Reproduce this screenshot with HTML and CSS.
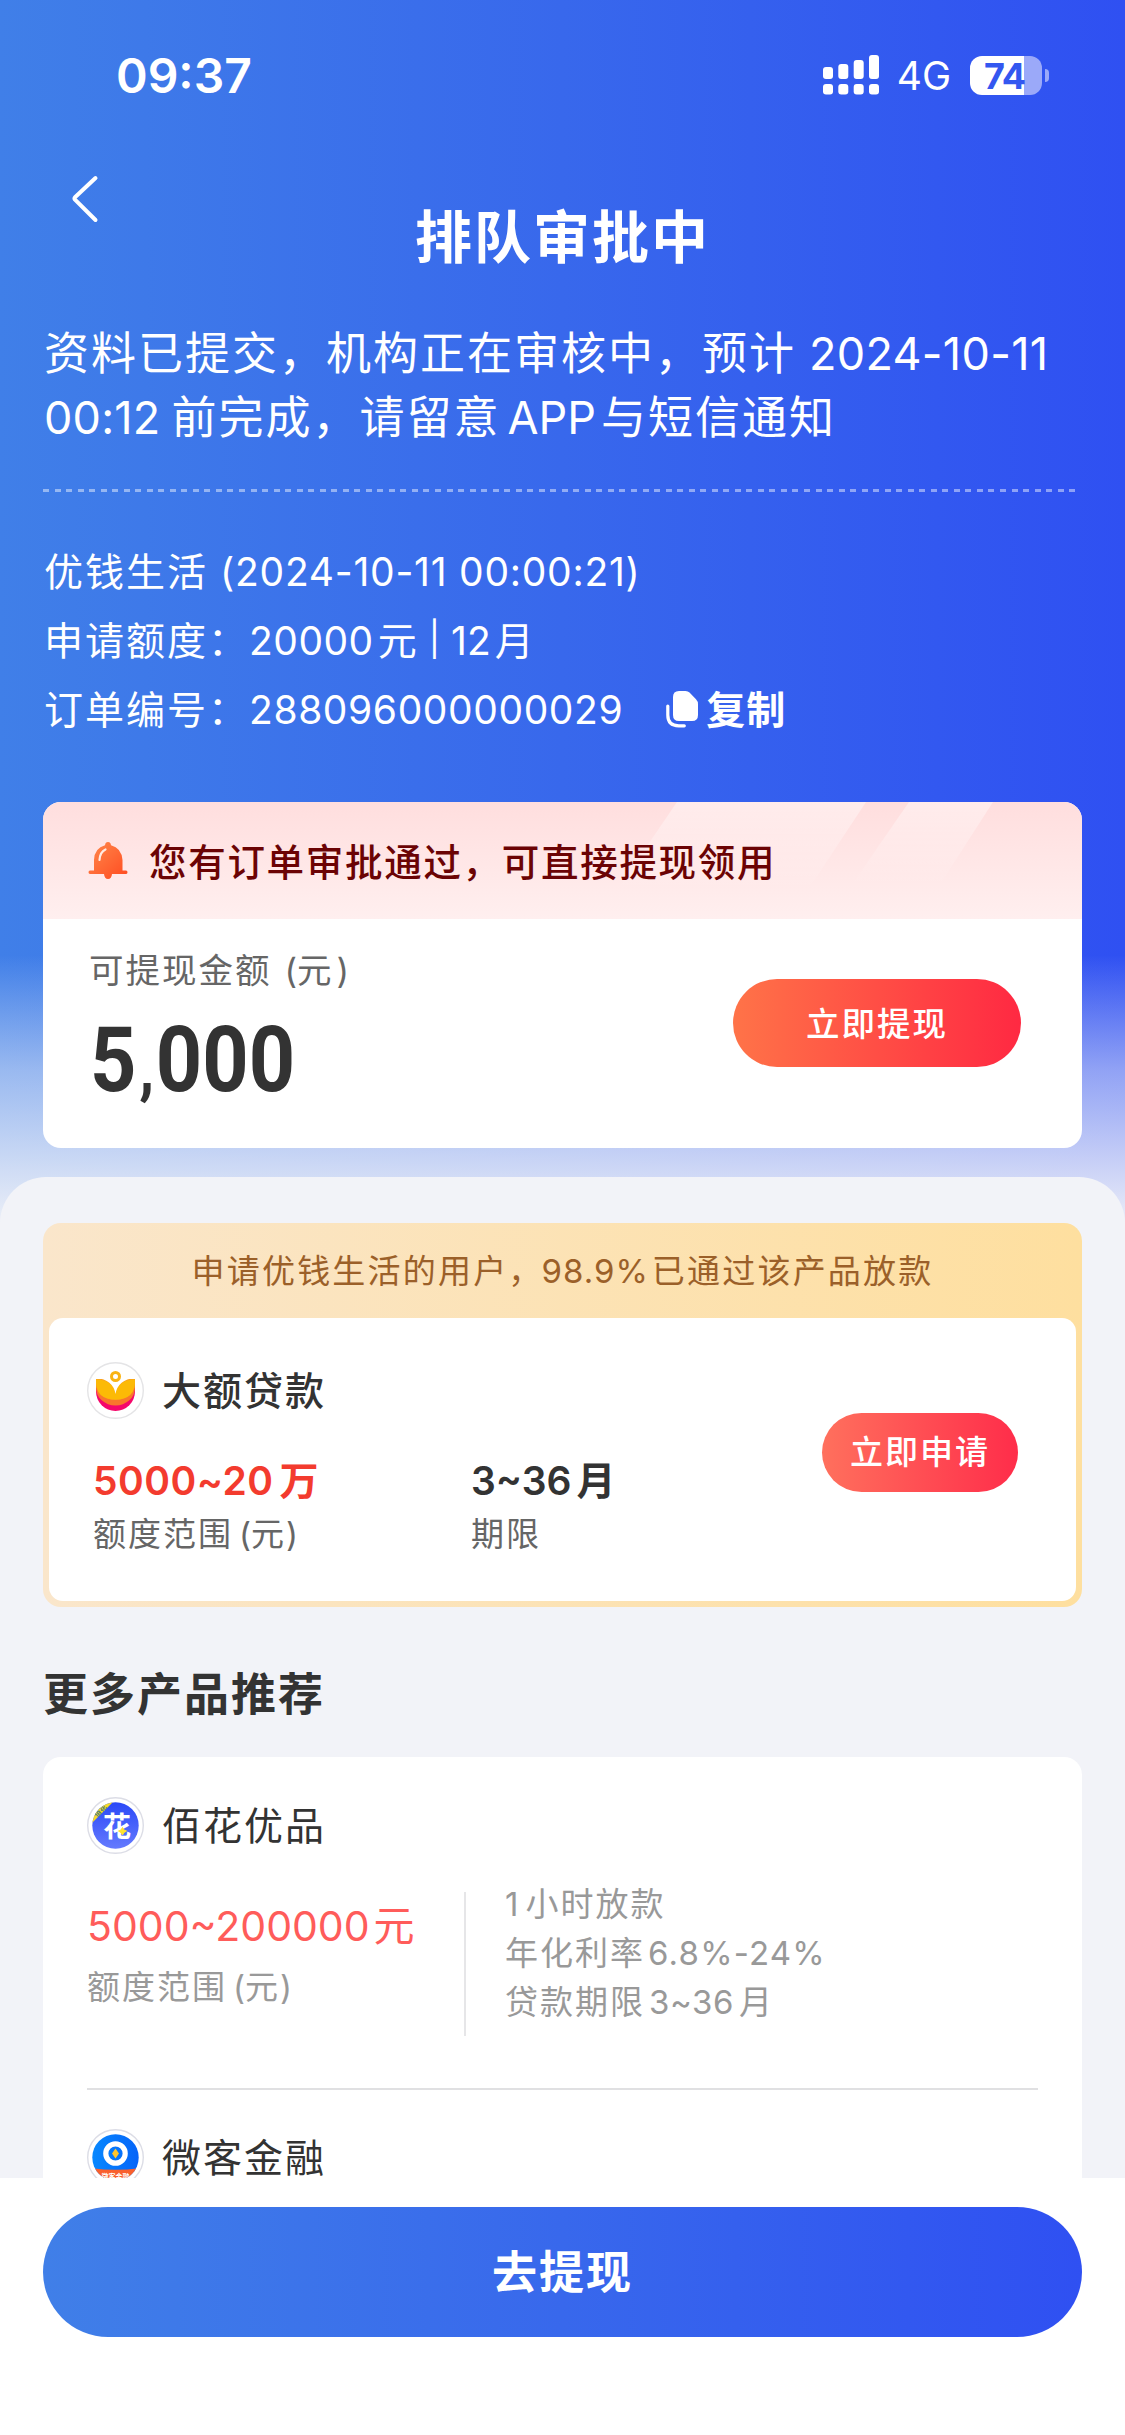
FILE: index.html
```html
<!DOCTYPE html>
<html lang="zh-CN">
<head>
<meta charset="utf-8">
<title>排队审批中</title>
<link rel="stylesheet" href="styles.css">
</head>
<body>
<div class="screen">
  <main class="content">
    <section class="hero">
      <div class="status-bar">
        <span class="time">09:37</span>
        <div class="status-icons">
          <svg class="signal" width="57" height="40" viewBox="0 0 57 40" fill="#fff">
            <rect x="0" y="12" width="10" height="12" rx="3"/><rect x="15.3" y="9" width="10" height="15" rx="3"/><rect x="30.7" y="5" width="10" height="19" rx="3"/><rect x="46" y="0" width="10" height="24" rx="3"/>
            <rect x="0" y="29" width="10" height="10.5" rx="3"/><rect x="15.3" y="29" width="10" height="10.5" rx="3"/><rect x="30.7" y="29" width="10" height="10.5" rx="3"/><rect x="46" y="29" width="10" height="10.5" rx="3"/>
          </svg>
          <span class="network">4G</span>
          <div class="battery"><span class="battery-level">74</span></div>
          <span class="battery-tip"></span>
        </div>
      </div>
      <header class="nav">
        <svg class="back" width="28" height="48" viewBox="0 0 28 48" fill="none" stroke="#fff" stroke-width="4" stroke-linecap="round" stroke-linejoin="round"><path d="M24.500 3 4 22.200q-1 1.200 0 2.400L24.500 45"/></svg>
        <h1>排队审批中</h1>
      </header>
      <div class="desc">
        <p>资料已提交，机构正在审核中，预计<span class="n d1">2024-10-11</span></p>
        <p><span class="n d2">00:12</span>前完成，请留意<span class="n d3">APP</span>与短信通知</p>
      </div>
      <div class="dashes"></div>
      <div class="info">
        <p>优钱生活<span class="n i1">(2024-10-11 00:00:21)</span></p>
        <p>申请额度：<span class="n i2">20000</span>元<span class="n i3">|</span><span class="n i4">12</span>月</p>
        <p>订单编号：<span class="n i5">288096000000029</span><span class="copy"><svg width="33" height="38" viewBox="0 0 33 38"><path d="M11 0h8.500q2.500 0 4 1.600l6.500 6.600q2 2 2 5V24q0 6-6 6H13q-6 0-6-6V6Q7 0 13 0z" fill="#fff"/><path d="M1.800 15v9q0 10.800 11 10.800h5.500" fill="none" stroke="#fff" stroke-width="3.200" stroke-linecap="round"/></svg>复制</span></p>
      </div>
      <article class="cash-card">
        <div class="cash-banner">
          <svg class="stripes" width="1039" height="117" viewBox="0 0 1039 117"><defs><linearGradient id="sf" x1="0" y1="0" x2="0" y2="1"><stop offset="0" stop-color="#fff" stop-opacity=".42"/><stop offset="1" stop-color="#fff" stop-opacity="0"/></linearGradient></defs><path d="M634 0H823L765 88H574z" fill="url(#sf)"/><path d="M866 0H950L896 84H808z" fill="url(#sf)"/></svg>
          <svg class="bell" width="40" height="38" viewBox="0 0 40 38"><defs><linearGradient id="bg" x1="0" y1="0" x2="1" y2="1"><stop offset="0" stop-color="#ff8a4c"/><stop offset="1" stop-color="#ff4a20"/></linearGradient></defs><path d="M20 0q2.600 0 3 3.300Q33.500 6 34.500 18v10.500h3.500q1.500 0 1.500 1.800T38 32H24q-.5 5-4 5t-4-5H2Q.5 32 .5 30.300T2 28.500h4V18Q6.500 6 17 3.300 17.400 0 20 0z" fill="url(#bg)"/><path d="M11.500 18q.5-8 6-10.500" fill="none" stroke="#fff" stroke-opacity=".85" stroke-width="2.200" stroke-linecap="round"/></svg>
          <span>您有订单审批通过，可直接提现领用</span>
        </div>
        <div class="cash-body">
          <div>
            <p class="cash-label">可提现金额<span class="n c1">(</span>元<span class="n c2">)</span></p>
            <p class="cash-amount">5<span class="comma">,</span>000</p>
          </div>
          <button class="withdraw">立即提现</button>
        </div>
      </article>
    </section>

    <section class="sheet">
      <article class="gold-card">
        <p class="gold-title">申请优钱生活的用户，<span class="n g1">98.9%</span>已通过该产品放款</p>
        <div class="gold-body">
          <div class="product">
            <div class="brand">
              <svg width="57" height="57" viewBox="0 0 57 57"><circle cx="28.500" cy="28.500" r="27.800" fill="#fff" stroke="#e4e4e6" stroke-width="1.400"/><path d="M9 24v5.500a19.500 19.500 0 0 0 39 0V24z" fill="#f5076b"/><path d="M9 21v5a19.500 17.500 0 0 0 39 0v-5z" fill="#f9762c"/><path d="M9 17v4.500a19.500 16.500 0 0 0 39 0V17z" fill="#faa01e"/><path d="M9 17.500Q26 17.500 28.500 32 31 17.500 48 17.500 49 37.500 28.500 37.500T9 17.500z" fill="#fcba06"/><path d="M9 16Q26 17.500 28.500 32 31 17.500 48 16V12H9z" fill="#fff"/><circle cx="28.500" cy="14.500" r="4" fill="none" stroke="#f9b313" stroke-width="3"/></svg>
              <span>大额贷款</span>
            </div>
            <div class="metrics">
              <div class="metric wide"><p class="value hot"><span class="n v1">5000~20</span>万</p><p class="label">额度范围<span class="n l1">(</span>元<span class="n l2">)</span></p></div>
              <div class="metric"><p class="value"><span class="n v2">3~36</span>月</p><p class="label">期限</p></div>
            </div>
          </div>
          <button class="apply">立即申请</button>
        </div>
      </article>

      <h2>更多产品推荐</h2>

      <div class="list">
        <article class="item">
          <div class="brand">
            <svg width="57" height="57" viewBox="0 0 57 57"><defs><linearGradient id="hb" x1="0" y1="0" x2="0" y2="1"><stop offset="0" stop-color="#2443f6"/><stop offset="1" stop-color="#6b80ff"/></linearGradient><clipPath id="hc"><circle cx="28.500" cy="28.500" r="23.200"/></clipPath></defs><circle cx="28.500" cy="28.500" r="27.800" fill="#fff" stroke="#dcdde6" stroke-width="1.400"/><g clip-path="url(#hc)"><rect width="57" height="57" fill="url(#hb)"/><path d="M0 0H31L5 26H0z" fill="#f3d92b"/><text x="15" y="15.500" class="mini" fill="#4e7c79" transform="rotate(-45 15 15.500)" text-anchor="middle">佰花</text><text x="30" y="39.500" class="logo-char" text-anchor="middle">花</text><path d="M35.500 30.500l1.500 2.500 2.500 1-2.500 1.500-1.500 2.500-1.500-2.500-2.500-1.500 2.500-1z" fill="#ffe32e" stroke="#ffe32e"/></g></svg>
            <span>佰花优品</span>
          </div>
          <div class="detail">
            <div class="range"><p class="amount"><span class="n a1">5000~200000</span>元</p><p class="label pale">额度范围<span class="n l1">(</span>元<span class="n l2">)</span></p></div>
            <div class="rule"></div>
            <div class="terms">
              <p><span class="n t1">1</span>小时放款</p>
              <p>年化利率<span class="n t2">6.8%-24%</span></p>
              <p>贷款期限<span class="n t3">3~36</span>月</p>
            </div>
          </div>
        </article>
        <article class="item">
          <div class="brand">
            <svg width="57" height="57" viewBox="0 0 57 57"><defs><linearGradient id="wb" x1="0" y1="0" x2="1" y2="0"><stop offset="0" stop-color="#078cff"/><stop offset="1" stop-color="#0560f8"/></linearGradient><clipPath id="wc"><circle cx="28.500" cy="28.500" r="23.200"/></clipPath></defs><circle cx="28.500" cy="28.500" r="27.800" fill="#fff" stroke="#dcdde6" stroke-width="1.400"/><g clip-path="url(#wc)"><rect width="57" height="57" fill="url(#wb)"/><circle cx="28.500" cy="24.500" r="9.700" fill="none" stroke="#fff" stroke-width="5.200"/><path d="M28.500 19.500l3.500 5-3.500 5-3.500-5z" fill="#ffc52e"/><path d="M0 38.500Q28.500 43 57 38.500V57H0z" fill="#f9602d"/><text x="28.500" y="50" class="mini" fill="#fff" text-anchor="middle">微客金融</text></g></svg>
            <span>微客金融</span>
          </div>
        </article>
      </div>
    </section>
  </main>
  <footer class="footer"><button class="cta">去提现</button></footer>
</div>
</body>
</html>
```
FILE: styles.css
```css
* { box-sizing: border-box; margin: 0; padding: 0; }
body { background: #fff; }
.screen {
  width: 1125px;
  height: 2435px;
  overflow: hidden;
  font-family: Inter, "Noto Sans CJK SC", sans-serif;
  color: #333;
  letter-spacing: 2px;
  white-space: nowrap;
}
button { border: 0; font: inherit; letter-spacing: inherit; color: #fff; text-align: center; }
svg { flex: none; display: block; }
.n { display: inline-block; letter-spacing: 0; white-space: pre; }

.content {
  height: 2178px;
  overflow: hidden;
  background:
    linear-gradient(180deg, rgba(242,243,248,0) 955px, rgba(242,243,248,.5) 1070px, #f2f3f8 1235px),
    linear-gradient(90deg, #407fe8, #3868ec 50%, #2f50f2);
}
.hero { color: #fff; padding: 0 43px; height: 1177px; }

.status-bar { height: 150px; display: flex; align-items: center; justify-content: space-between; padding: 0 33px 0 73px; }
.time { font-size: 48px; font-weight: 600; letter-spacing: 0; }
.status-icons { display: flex; align-items: center; }
.network { font-size: 39px; letter-spacing: 0; margin: 2px 19px 0 17px; line-height: 40px; }
.battery { width: 72px; height: 39px; border-radius: 12px; background: linear-gradient(90deg, #fff 54px, #9ba9f9 54px); }
.battery-level { display: block; font-size: 36px; font-weight: 700; line-height: 40px; letter-spacing: -1px; color: #3357f0; padding-left: 14px; }
.battery-tip { width: 4px; height: 13px; margin-left: 3px; background: #9ba9f9; border-radius: 0 5px 5px 0; }

.nav { height: 172px; display: grid; grid-template-columns: 60px 1fr 60px; align-items: center; }
.back { align-self: start; margin: 25px 0 0 28px; }
h1 { font-size: 57px; font-weight: 600; line-height: 80px; text-align: center; padding-top: 3px; }

.desc { font-size: 45px; line-height: 64px; padding-left: 1px; }
.dashes { height: 3px; width: 1035px; margin-top: 39px; background: repeating-linear-gradient(90deg, rgba(255,255,255,.45) 0 6px, transparent 6px 11.530px); }
.info { margin-top: 45px; font-size: 39px; line-height: 69px; padding-left: 1px; }
.info p { display: flex; }
.copy { display: flex; align-items: center; gap: 7px; font-weight: 600; letter-spacing: 1px; }

.cash-card { margin-top: 58px; height: 346px; background: #fff; border-radius: 18px; overflow: hidden; color: #333; }
.cash-banner { position: relative; height: 117px; display: flex; align-items: center; gap: 21px; padding: 0 0 0 45px; background: linear-gradient(#ffdede, #ffefef); color: #6b0304; font-size: 37.500px; font-weight: 500; letter-spacing: 1.700px; line-height: 60px; }
.stripes { position: absolute; left: 0; top: 0; }
.bell, .cash-banner span { position: relative; }
.cash-banner span { padding-top: 4px; }
.cash-body { height: 229px; display: flex; justify-content: space-between; padding: 26px 61px 0 46px; }
.cash-label { font-size: 34.500px; line-height: 52px; color: #666; }
.cash-amount { font: 700 91px/92px Roboto, sans-serif; letter-spacing: 0; margin: 17px 0 0 1px; transform: scaleX(.89); transform-origin: 0 50%; }
.comma { font-size: 68px; margin: 0 2px 0 3px; }
.withdraw { width: 288px; height: 88px; margin-top: 34px; border-radius: 44px; background: linear-gradient(90deg, #ff7348, #ff2942); font-size: 33.500px; font-weight: 500; line-height: 90px; }

.sheet { height: 1001px; border-radius: 46px 46px 0 0; background: #f2f3f8; padding: 46px 43px 0; }
.gold-card { height: 384px; padding: 0 6px 6px; border-radius: 18px; background: linear-gradient(90deg, #fae6cb, #fedf9f); }
.gold-title { height: 95px; line-height: 96px; text-align: center; font-size: 33px; color: #9b6029; letter-spacing: 2.200px; }
.gold-body { height: 283px; display: flex; justify-content: space-between; padding: 44px 58px 0 38px; background: #fff; border-radius: 14px; }
.brand { display: flex; align-items: center; gap: 18px; height: 57px; font-size: 39px; line-height: 57px; }
.gold-body .brand { font-weight: 500; }
.metrics { display: flex; padding: 35px 0 0 6px; }
.metric.wide { width: 378px; }
.value { font-size: 39px; line-height: 54px; font-weight: 600; }
.hot { color: #f33b2e; }
.label { font-size: 33px; line-height: 52px; color: #666; }
.apply { width: 196px; height: 79px; margin-top: 51px; border-radius: 40px; background: linear-gradient(90deg, #ff705d, #ff2d4a); font-size: 33px; font-weight: 500; line-height: 79px; }

h2 { margin-top: 43px; height: 90px; line-height: 90px; font-size: 45px; font-weight: 600; }
.list { margin-top: 17px; height: 500px; padding: 0 44px; background: #fff; border-radius: 18px 18px 0 0; }
.item { padding-top: 40px; }
.item + .item { border-top: 2px solid #e0e0e2; padding-top: 39px; }
.detail { height: 234px; padding-top: 25px; display: flex; }
.range { width: 377px; padding-top: 20px; }
.amount { font-size: 41px; line-height: 54px; color: #ff5c5a; }
.pale { color: #999; margin-top: 8px; }
.rule { width: 2px; height: 144px; margin-top: 13px; background: #e6e6e8; }
.terms { padding: 1px 0 0 39px; font-size: 33px; line-height: 49px; color: #999; }

.logo-char { font: 700 28px "Noto Sans CJK SC", sans-serif; letter-spacing: 0; fill: #fff; }
.mini { font: 700 7px "Noto Sans CJK SC", sans-serif; letter-spacing: 0; }

.footer { height: 257px; padding: 29px 43px 0; background: #fff; }
.cta { width: 1039px; height: 130px; border-radius: 65px; background: linear-gradient(90deg, #407fe8, #3868ec 50%, #2f50f2); font-size: 45px; font-weight: 600; line-height: 132px; display: block; }

.d1 { margin-left: 13px; letter-spacing: .3px; }
.d2 { margin-right: 11px; letter-spacing: .2px; }
.d3 { margin: 0 5px 0 7px; }
.i1 { margin-left: 12px; letter-spacing: .75px; }
.i2 { margin: 0 4px 0 0; letter-spacing: .5px; }
.i3 { margin: -2px 11px 0 10px; font-size: 34px; }
.i4 { margin-right: 4px; }
.i5 { margin-right: 43px; letter-spacing: .6px; }
.c1 { margin: 0 0 0 13px; }
.c2 { margin-left: 3px; }
.g1 { margin-right: 3px; margin-left: -2px; letter-spacing: 1px; }
.v1 { margin-right: 6px; letter-spacing: .5px; }
.v2 { margin-right: 5px; }
.l1 { margin-left: 6px; }
.a1 { margin-right: 4px; }
.t1 { margin-right: 7px; }
.t2 { margin-left: 3px; letter-spacing: 1.200px; }
.t3 { margin: 0 5px 0 4px; letter-spacing: .6px; }
```
